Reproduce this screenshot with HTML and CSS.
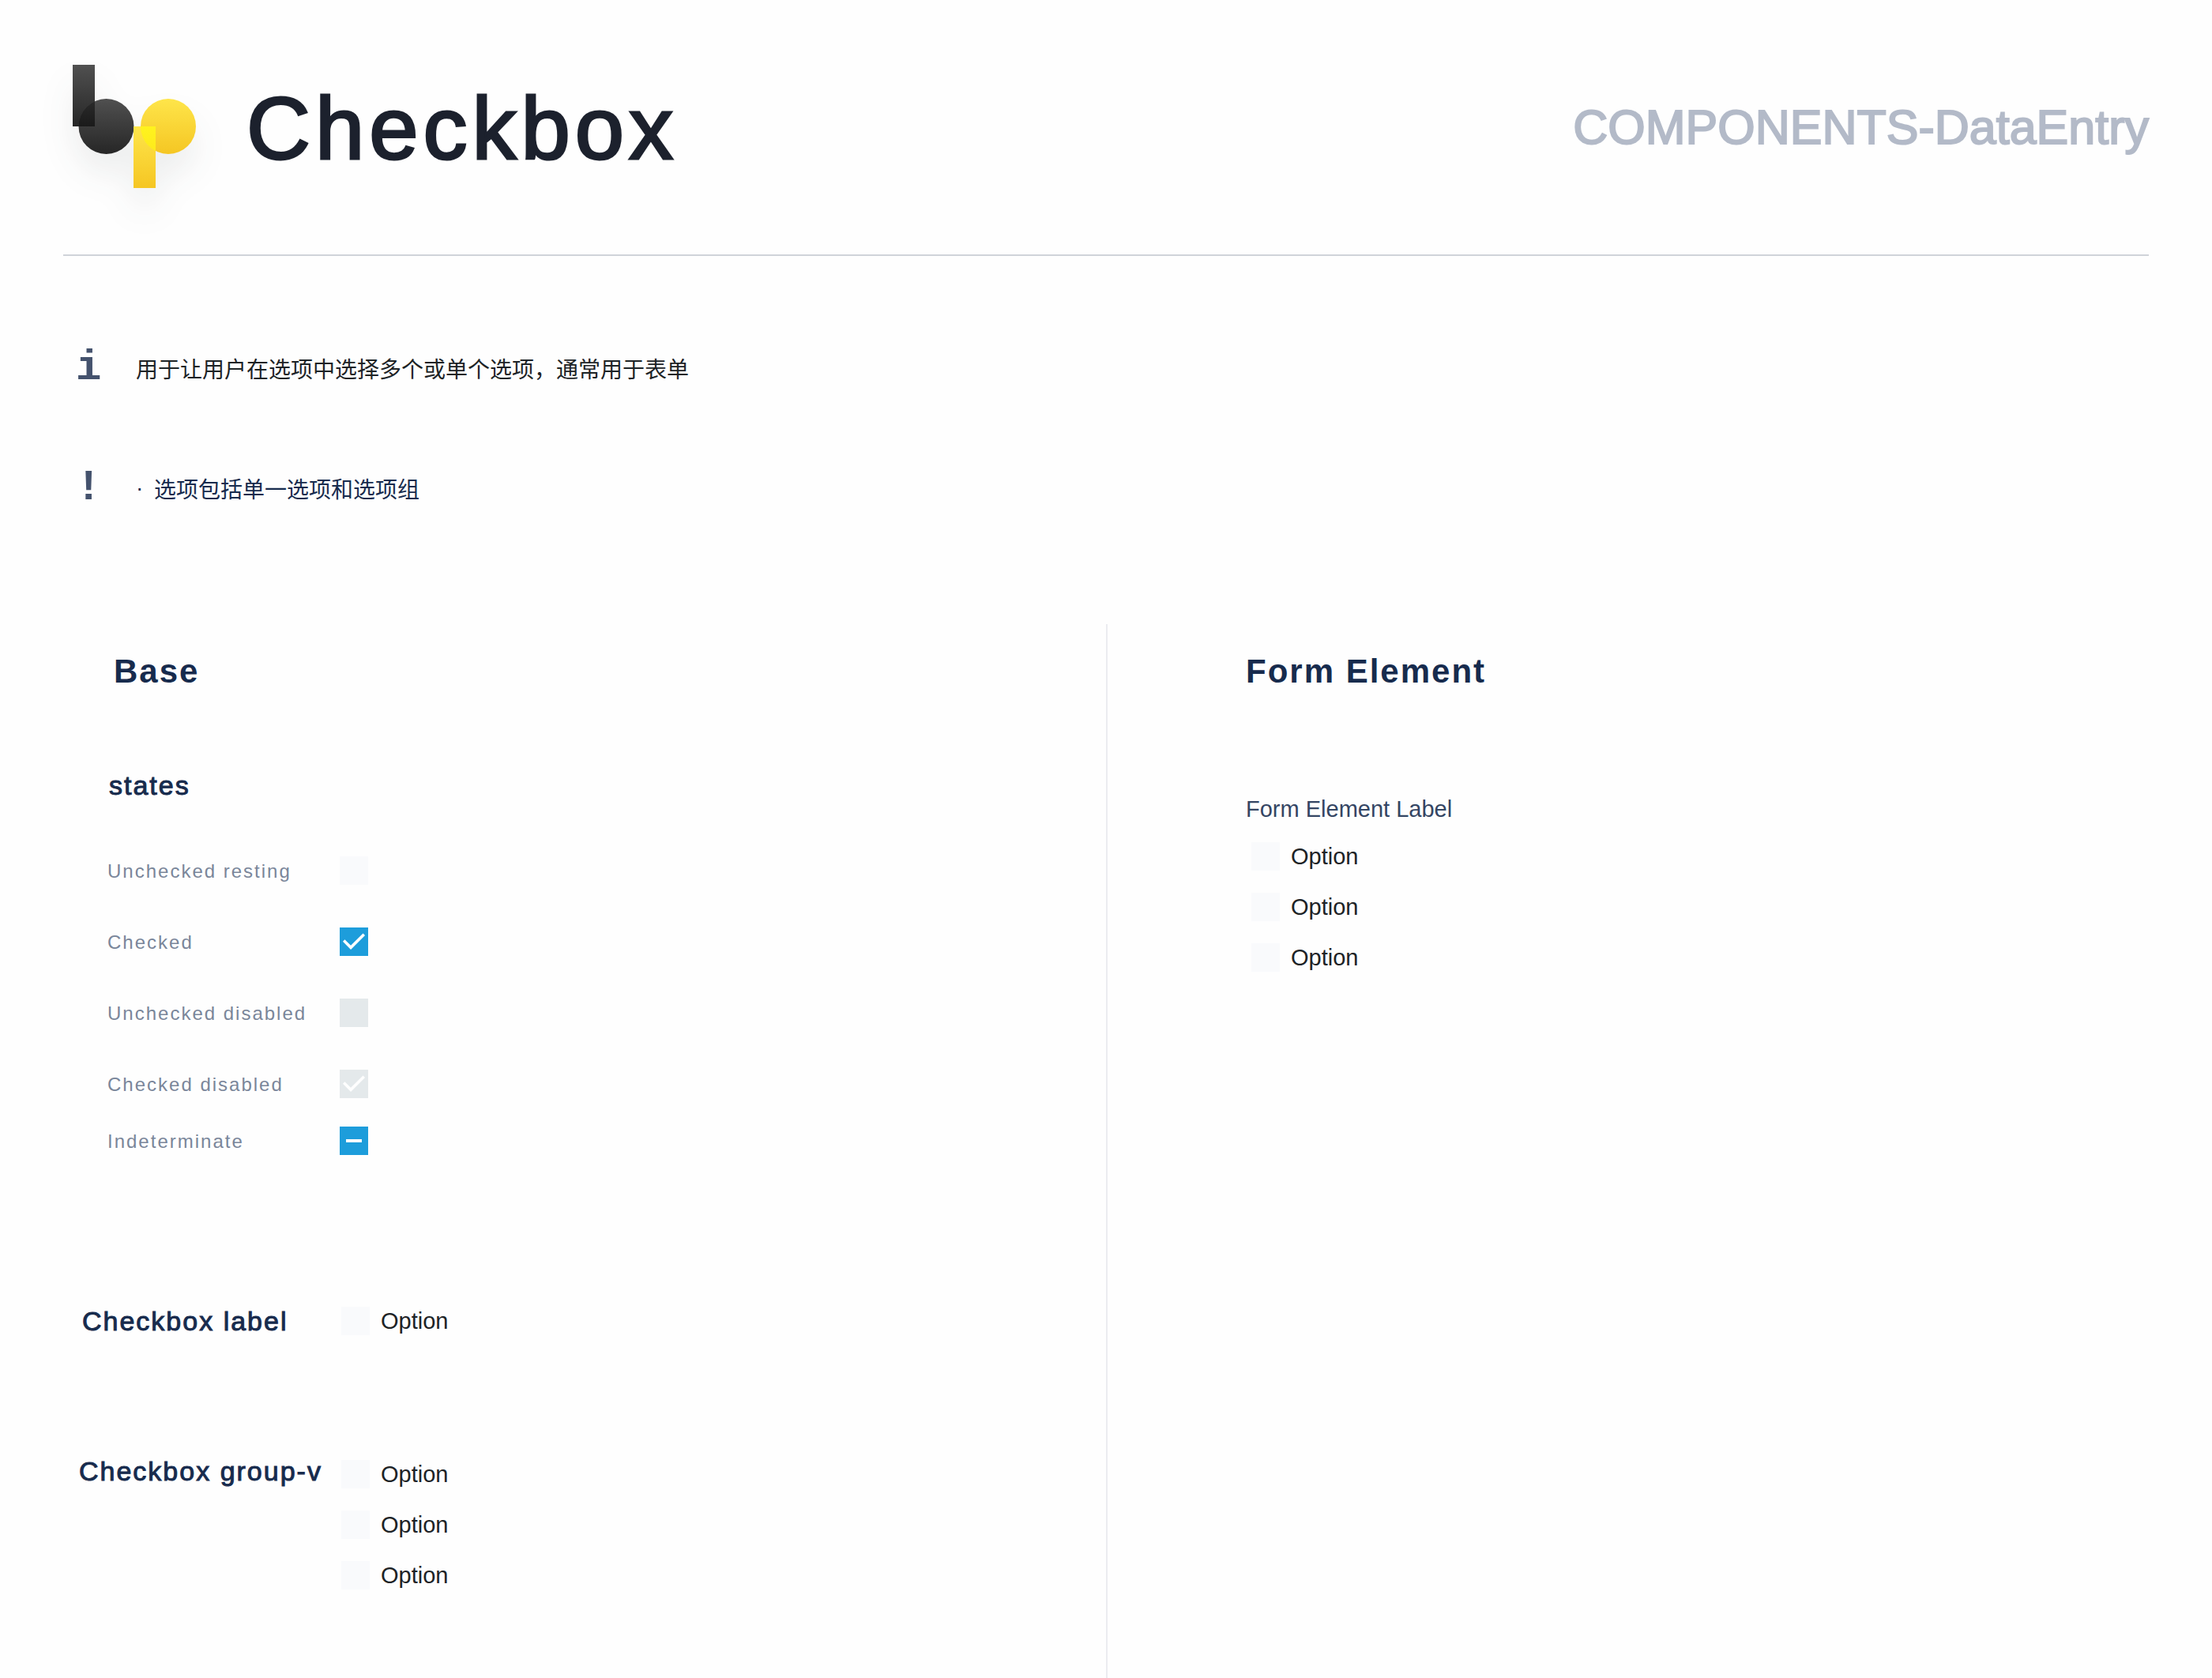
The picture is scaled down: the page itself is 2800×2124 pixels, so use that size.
FILE: index.html
```html
<!DOCTYPE html>
<html lang="zh-CN">
<head>
  <meta charset="utf-8">
  <meta name="viewport" content="width=device-width, initial-scale=1">
  <title>Checkbox</title>
  <link rel="stylesheet" href="styles.css">
</head>
<body>
  <header class="page-header">
    <svg class="logo" viewBox="0 0 156 158" role="img" aria-label="bp">
      <defs>
        <linearGradient id="dark" x1="0" y1="0" x2="0" y2="1">
          <stop offset="0" stop-color="#505050"/>
          <stop offset="1" stop-color="#262626"/>
        </linearGradient>
        <linearGradient id="gold" x1="0" y1="0" x2="0" y2="1">
          <stop offset="0" stop-color="#fee54a"/>
          <stop offset="1" stop-color="#f5c623"/>
        </linearGradient>
        <linearGradient id="dark-overlap" gradientUnits="userSpaceOnUse" x1="0" y1="43" x2="0" y2="78">
          <stop offset="0" stop-color="#2c2c2c"/>
          <stop offset="1" stop-color="#1a1a1a"/>
        </linearGradient>
        <linearGradient id="gold-overlap" gradientUnits="userSpaceOnUse" x1="0" y1="78" x2="0" y2="113">
          <stop offset="0" stop-color="#fff31e"/>
          <stop offset="1" stop-color="#fde91c"/>
        </linearGradient>
        <clipPath id="stem-b"><rect x="0" y="0" width="28" height="78"/></clipPath>
        <clipPath id="stem-p"><rect x="77" y="78" width="28" height="78"/></clipPath>
      </defs>
      <g class="logo-shape">
        <rect x="0" y="0" width="28" height="78" fill="url(#dark)"/>
        <circle cx="42.500" cy="78" r="35" fill="url(#dark)"/>
        <circle cx="42.500" cy="78" r="35" fill="url(#dark-overlap)" clip-path="url(#stem-b)"/>
        <circle cx="121" cy="78" r="35" fill="url(#gold)"/>
        <rect x="77" y="78" width="28" height="78" fill="url(#gold)"/>
        <circle cx="121" cy="78" r="35" fill="url(#gold-overlap)" clip-path="url(#stem-p)"/>
      </g>
    </svg>
    <h1 class="title">Checkbox</h1>
    <p class="category">COMPONENTS-DataEntry</p>
  </header>

  <main class="page-main">
    <section class="notes">
      <div class="note">
        <span class="note-icon" aria-hidden="true">i</span>
        <p class="note-text">用于让用户在选项中选择多个或单个选项，通常用于表单</p>
      </div>
      <div class="note">
        <span class="note-icon" aria-hidden="true">!</span>
        <p class="note-text note-text-navy"><span class="bullet">·</span>选项包括单一选项和选项组</p>
      </div>
    </section>

    <div class="columns">
      <section class="column">
        <h2 class="heading heading-base">Base</h2>
        <h3 class="subheading subheading-states">states</h3>

        <div class="states">
          <div class="state">
            <label class="state-label" for="unchecked">Unchecked resting</label>
            <input class="checkbox" type="checkbox" id="unchecked">
          </div>
          <div class="state">
            <label class="state-label" for="checked">Checked</label>
            <input class="checkbox" type="checkbox" id="checked" checked>
          </div>
          <div class="state">
            <label class="state-label" for="unchecked-disabled">Unchecked disabled</label>
            <input class="checkbox" type="checkbox" id="unchecked-disabled" disabled>
          </div>
          <div class="state">
            <label class="state-label" for="checked-disabled">Checked disabled</label>
            <input class="checkbox" type="checkbox" id="checked-disabled" checked disabled>
          </div>
          <div class="state state-last">
            <label class="state-label" for="indeterminate">Indeterminate</label>
            <input class="checkbox" type="checkbox" id="indeterminate">
          </div>
        </div>

        <div class="example">
          <h3 class="subheading subheading-label">Checkbox label</h3>
          <label class="option"><input class="checkbox" type="checkbox">Option</label>
        </div>

        <div class="example example-group">
          <h3 class="subheading subheading-group" id="group-title">Checkbox group-v</h3>
          <div class="options" role="group" aria-labelledby="group-title">
            <label class="option"><input class="checkbox" type="checkbox">Option</label>
            <label class="option"><input class="checkbox" type="checkbox">Option</label>
            <label class="option"><input class="checkbox" type="checkbox">Option</label>
          </div>
        </div>
      </section>

      <section class="column column-form">
        <h2 class="heading">Form Element</h2>
        <div class="field" role="group" aria-labelledby="field-title">
          <p class="field-label" id="field-title">Form Element Label</p>
          <div class="options field-options">
            <label class="option"><input class="checkbox" type="checkbox">Option</label>
            <label class="option"><input class="checkbox" type="checkbox">Option</label>
            <label class="option"><input class="checkbox" type="checkbox">Option</label>
          </div>
        </div>
      </section>
    </div>
  </main>
  <script src="script.js"></script>
</body>
</html>
```

FILE: styles.css
```css
* {
  box-sizing: border-box;
}

body {
  display: flex;
  flex-direction: column;
  min-height: 100vh;
  margin: 0;
  padding: 0 80px;
  background: #fefefe;
  color: #1d2326;
  font-family: "Liberation Sans", "Noto Sans CJK SC", sans-serif;
}

h1,
h2,
h3,
p {
  margin: 0;
  font-weight: 400;
}

/* Header */

.page-header {
  display: flex;
  align-items: center;
  padding: 82px 0 82px 12px;
  border-bottom: 2px solid #cfd3d9;
}

.logo {
  flex: none;
  width: 156px;
  height: 158px;
  overflow: visible;
}

.logo-shape {
  filter: drop-shadow(0 26px 20px rgba(38, 50, 56, 0.08));
}

.title {
  margin-left: 64px;
  padding-top: 4px;
  color: #1c212d;
  font-size: 112px;
  line-height: 120px;
  letter-spacing: 6px;
  -webkit-text-stroke: 3px #1c212d;
}

.category {
  margin-left: auto;
  color: #b3bac8;
  font-size: 61px;
  line-height: 70px;
  -webkit-text-stroke: 2px #b3bac8;
}

.page-main {
  display: flex;
  flex: 1;
  flex-direction: column;
}

/* Notes */

.notes {
  display: flex;
  flex-direction: column;
  gap: 116px;
  padding: 124px 0 154px 16px;
}

.note {
  display: flex;
  align-items: flex-start;
}

.note-icon {
  width: 76px;
  color: #44526d;
  font-family: "Liberation Mono", monospace;
  font-size: 54px;
  font-weight: 700;
  line-height: 36px;
}

.note-text {
  font-family: "Noto Sans CJK SC", sans-serif;
  font-size: 28px;
  line-height: 36px;
}

.note-text-navy {
  display: flex;
  color: #172b4d;
}

.bullet {
  width: 23px;
  font-family: "Liberation Sans", sans-serif;
}

/* Columns */

.columns {
  display: grid;
  flex: 1;
  grid-template-columns: 1fr 1fr;
}

.column {
  padding: 35px 0 80px;
}

.column-form {
  padding-left: 175px;
  border-left: 2px solid #ebecf0;
}

.heading {
  color: #172b4d;
  font-size: 42px;
  font-weight: 700;
  line-height: 50px;
  letter-spacing: 2px;
}

.heading-base {
  padding-left: 64px;
}

.subheading {
  color: #172b4d;
  font-size: 34px;
  line-height: 40px;
  letter-spacing: 2px;
  -webkit-text-stroke: 1px #172b4d;
}

.subheading-states {
  margin-top: 99px;
  padding-left: 58px;
}

.subheading-label {
  padding-left: 24px;
}

.subheading-group {
  padding-left: 20px;
  line-height: 28px;
}

/* States */

.states {
  display: flex;
  flex-direction: column;
  gap: 54px;
  margin-top: 70px;
  padding-left: 56px;
}

.state {
  display: grid;
  grid-template-columns: 294px auto;
  align-items: center;
  justify-content: start;
}

.state-last {
  margin-top: -18px;
}

.state-label {
  padding-top: 2px;
  color: #7a869a;
  font-size: 24px;
  line-height: 34px;
  letter-spacing: 2px;
}

/* Examples */

.example {
  display: grid;
  grid-template-columns: 352px auto;
  align-items: center;
  justify-content: start;
  margin-top: 190px;
}

.example-group {
  align-items: start;
  margin-top: 156px;
}

.options {
  display: flex;
  flex-direction: column;
  align-items: flex-start;
  gap: 28px;
}

.option {
  display: flex;
  align-items: center;
  gap: 14px;
  font-size: 29px;
  line-height: 36px;
}

.field {
  margin-top: 131px;
}

.field-label {
  color: #344563;
  font-size: 29px;
  line-height: 36px;
}

.field-options {
  margin-top: 24px;
  padding-left: 7px;
}

/* Checkbox */

.checkbox {
  flex: none;
  width: 36px;
  height: 36px;
  margin: 0;
  appearance: none;
  background: #f9fafc;
}

.checkbox::before {
  display: none;
  width: 36px;
  height: 36px;
  background: #fefefe;
  content: "";
}

.checkbox:checked,
.checkbox:indeterminate {
  background: #1d9ddb;
}

.checkbox:disabled {
  background: #e4e9eb;
}

.checkbox:checked::before {
  display: block;
  clip-path: polygon(11% 49.500%, 18% 42.500%, 39% 63.500%, 82% 20.500%, 89% 27.500%, 39% 77.500%);
}

.checkbox:indeterminate::before {
  display: block;
  clip-path: inset(16px 8px);
}
```

FILE: script.js
```js
document.getElementById("indeterminate").indeterminate = true;
```
